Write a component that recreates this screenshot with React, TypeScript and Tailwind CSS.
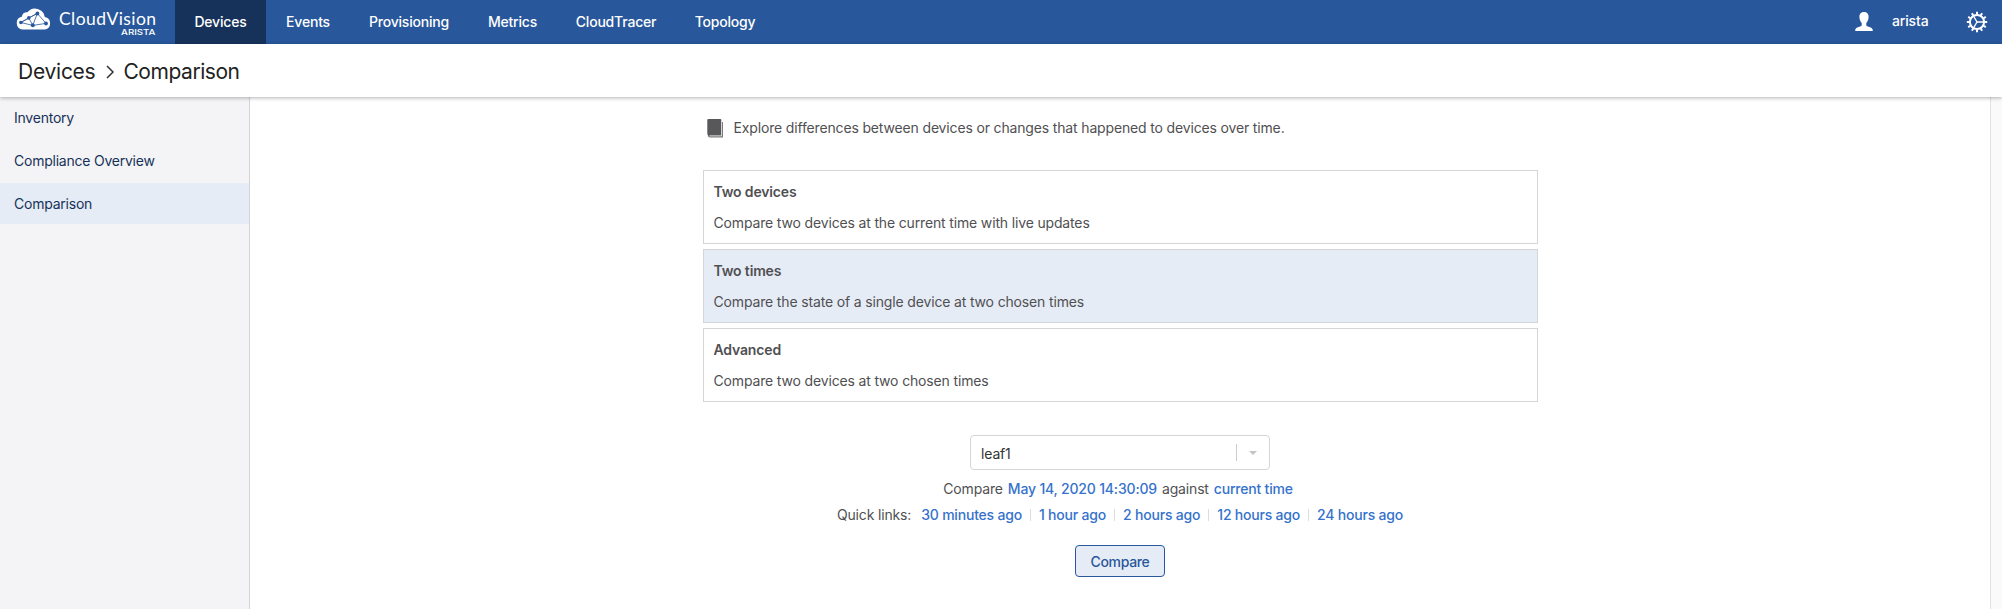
const navItems = [
  { label: "Devices", cls: "w-[91px] bg-[#17325a]" },
  { label: "Events", cls: "w-[84px]" },
  { label: "Provisioning", cls: "w-[118px]" },
  { label: "Metrics", cls: "w-[89px]" },
  { label: "CloudTracer", cls: "w-[118px]" },
  { label: "Topology", cls: "w-[100px]" },
];

const modes = [
  { title: "Two devices", text: "Compare two devices at the current time with live updates", cls: "bg-white" },
  { title: "Two times", text: "Compare the state of a single device at two chosen times", cls: "bg-[#e6ecf6]" },
  { title: "Advanced", text: "Compare two devices at two chosen times", cls: "bg-white" },
];

const quickLinks = ["30 minutes ago", "1 hour ago", "2 hours ago", "12 hours ago", "24 hours ago"];

function CloudLogo() {
  return (
    <svg width="36" height="22" viewBox="0.5 0 35 22" className="shrink-0">
      <path
        d="M6.600 21.500a6.500 6.500 0 0 1-.8-12.800A5.400 5.400 0 0 1 11.400 4.300a9.800 9.800 0 0 1 17.400 4.800A6.300 6.300 0 0 1 29 21.500z"
        fill="#fff"
      />
      <g stroke="#28579b" strokeWidth="0.800" fill="none">
        <path d="M4.800 14.500 12.800 9.900l8.500-4.500 8.700 10-13.200 2z" />
        <path d="M12.800 9.900l4 7.500M21.300 5.400l-4.500 12M4.800 14.500l16.500-9.100" />
      </g>
      <g fill="#28579b">
        <circle cx="4.900" cy="14.500" r="1.800" />
        <circle cx="12.800" cy="9.900" r="1.800" />
        <circle cx="21.400" cy="5.500" r="1.900" />
        <circle cx="16.800" cy="17.200" r="2" />
        <circle cx="30" cy="15.500" r="1.900" />
      </g>
    </svg>
  );
}

function Wordmark() {
  return (
    <svg width="98" height="30" viewBox="0 0 98 30" fill="#fff" className="shrink-0">
      <text x="0" y="17" textLength="97" lengthAdjust="spacing" fontFamily="Lato" fontSize="17.500">CloudVision</text>
      <text x="62" y="27" textLength="34.500" lengthAdjust="spacingAndGlyphs" fontFamily="Inter" fontSize="8" fontWeight="500">ARISTA</text>
    </svg>
  );
}

function UserIcon() {
  return (
    <svg width="18" height="20" viewBox="0 0 18 20" fill="#fff">
      <path d="M9 0C5.800 0 4.200 2 4.400 5c.1 2.700 1 4.600 2.300 6v2.600c-.6 1.300-5.900 1.500-6.400 4.200L.2 19h17.600l-.1-1.200c-.5-2.700-5.800-2.900-6.400-4.200V11c1.300-1.400 2.200-3.300 2.300-6C13.800 2 12.200 0 9 0z" />
    </svg>
  );
}

const teeth = [0, 30, 60, 90, 120, 150, 180, 210, 240, 270, 300, 330];

function GearIcon() {
  return (
    <svg width="22" height="22" viewBox="-11 -11 22 22" stroke="#fff" fill="none">
      <circle r="7.100" strokeWidth="2" />
      {teeth.map((a) => (
        <path key={a} d="M0-7.500V-10.200" strokeWidth="2" transform={`rotate(${a})`} />
      ))}
      <path d="M0 0H7M0 0-3.500-6M0 0-3.500 6" strokeWidth="1.400" />
    </svg>
  );
}

function BookIcon() {
  return (
    <svg width="17" height="19" viewBox="0 0 17 19">
      <path d="M3 3h13V18.500H3A2.200 2.200 0 0 1 .8 16.300z" fill="#7c7c7e" />
      <path d="M1.300 0h12a1 1 0 0 1 1 1v15.800H2.500A2.200 2.200 0 0 1 .3 14.600V1A1 1 0 0 1 1.300 0z" fill="#58585a" />
      <path d="M2.500 16.800H14.500V2.500" stroke="#fff" strokeWidth="0.700" fill="none" />
    </svg>
  );
}

export default function App() {
  return (
    <div className="flex h-[609px] w-full flex-col overflow-hidden bg-white font-['Inter',sans-serif] text-[14px] leading-[20px] tracking-[-0.155px] text-[#505052]">
      <header className="flex h-[44px] shrink-0 items-center bg-[#28579b] text-white">
        <div className="flex h-full w-[175px] items-start gap-[7px] pt-[8px] pl-[16px] tracking-normal">
          <CloudLogo />
          <Wordmark />
        </div>
        <nav className="flex h-full font-medium tracking-[-0.2px]">
          {navItems.map((n) => (
            <a key={n.label} className={`flex items-center justify-center ${n.cls}`}>{n.label}</a>
          ))}
        </nav>
        <div className="ml-auto flex items-center pr-[14px]">
          <UserIcon />
          <span className="mt-[-3px] ml-[19px] w-[36px] font-medium">arista</span>
          <div className="ml-[38px]"><GearIcon /></div>
        </div>
      </header>
      <div className="relative z-10 flex h-[53px] shrink-0 items-center bg-white pt-[2px] pl-[18px] text-[21px] text-[#222] shadow-[0_1px_4px_rgba(0,0,0,0.3)]">
        <span className="tracking-[-0.25px]">Devices</span>
        <svg width="10" height="14" viewBox="0 0 10 14" className="mr-[8px] ml-[10px]" fill="none" stroke="#333" strokeWidth="1.500">
          <path d="M2 1l6 6-6 6" />
        </svg>
        <span className="tracking-[-0.45px]">Comparison</span>
      </div>
      <div className="flex min-h-0 flex-1">
        <aside className="flex w-[250px] shrink-0 flex-col gap-[2px] border-r border-[#d4d4d6] bg-[#f4f4f6] tracking-[-0.23px] text-[#17325a]">
          <a className="flex h-[41px] items-center pl-[14px]">Inventory</a>
          <a className="flex h-[41px] items-center pl-[14px]">Compliance Overview</a>
          <a className="flex h-[41px] items-center bg-[#e5ecf6] pl-[14px]">Comparison</a>
        </aside>
        <main className="flex flex-1 flex-col items-center">
          <div className="flex w-[835px] flex-col">
            <div className="mt-[22px] flex h-[19px] items-center pl-[4px]">
              <BookIcon />
              <span className="ml-[10px] pb-px">Explore differences between devices or changes that happened to devices over time.</span>
            </div>
            <div className="mt-[32px] flex flex-col gap-[5px]">
              {modes.map((m) => (
                <div key={m.title} className={`flex h-[74px] flex-col gap-[11px] border border-[#d4d5d7] pt-[11px] pl-[10px] ${m.cls}`}>
                  <span className="font-semibold">{m.title}</span>
                  <span>{m.text}</span>
                </div>
              ))}
            </div>
          </div>
          <div className="mt-[33px] flex h-[35px] w-[300px] items-center rounded-[4px] border border-[#d5d5d6] pl-[10px] text-[#333]">
            <span className="pt-[3px]">leaf1</span>
            <span className="ml-auto h-[17px] w-px bg-[#ccc]" />
            <svg width="8" height="4" viewBox="0 0 8 4" className="mr-[12px] ml-[12px]" fill="#c4c4c4"><path d="M0 0h8L4 4z" /></svg>
          </div>
          <div className="mt-[9px] flex gap-[5px] pr-[4px]">
            <span>Compare</span>
            <a className="font-medium tracking-[-0.18px] text-[#3572cc]">May 14, 2020 14:30:09</a>
            <span>against</span>
            <a className="font-medium tracking-[-0.2px] text-[#3572cc]">current time</a>
          </div>
          <div className="mt-[6px] flex items-center">
            <span className="mr-[10px]">Quick links:</span>
            {quickLinks.map((q, i) => (
              <div key={q} className="flex items-center">
                {i > 0 && <span className="mx-[8px] h-[12px] w-px bg-[#ddd]" />}
                <a className="font-medium tracking-[-0.2px] text-[#3572cc]">{q}</a>
              </div>
            ))}
          </div>
          <button className="mt-[20px] h-[32px] w-[90px] rounded-[4px] border border-[#28579b] bg-[#e6ecf6] pt-px font-medium tracking-[-0.35px] text-[#28579b]">Compare</button>
        </main>
        <div className="w-[12px] shrink-0 border-l border-[#e2e2e3] bg-[#fafafa]" />
      </div>
    </div>
  );
}
